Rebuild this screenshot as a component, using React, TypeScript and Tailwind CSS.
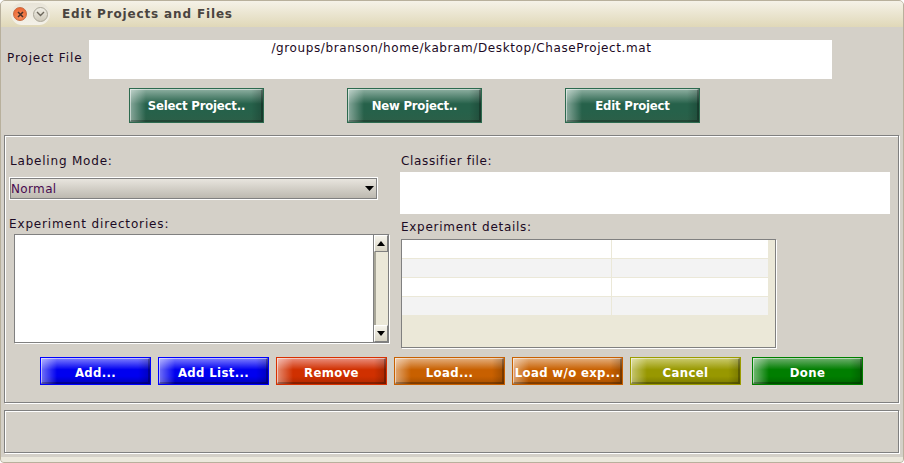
const font = "font-['DejaVu_Sans',sans-serif]";

function GlossButton({ label, border, base, dark, light, className = "", textClass = "" }: { label: string; border: string; base: string; dark: string; light: string; className?: string; textClass?: string }) {
  return (
    <button
      className={`relative flex items-center justify-center border whitespace-nowrap text-white font-bold text-[13px] overflow-hidden font-['DejaVu_Sans_Condensed','DejaVu_Sans',sans-serif] ${className}`}
      style={{ borderColor: border, background: `linear-gradient(to bottom, ${light} 0%, ${base} 45%, ${base} 70%, ${dark} 100%)` }}
    >
      <span className="absolute inset-y-0 left-0 w-4 bg-gradient-to-r from-white/45 to-transparent" />
      <span className="absolute inset-y-0 right-0 w-3 bg-gradient-to-l from-black/20 to-transparent" />
      <span className="absolute inset-0 border-t border-l border-white/50 border-r-2 border-b-2 border-r-black/25 border-b-black/25" />
      <span className={`relative ${textClass}`}>{label}</span>
    </button>
  );
}

function Etched({ className = "", children }: { className?: string; children?: React.ReactNode }) {
  return (
    <div className={`border border-[#808080] shadow-[inset_1px_1px_0_#fff,1px_1px_0_#fff] ${className}`}>{children}</div>
  );
}

const colors = {
  green: { border: "#2d6a4f", base: "#26614a", dark: "#2c5f48", light: "#8fb0a2" },
  blue: { border: "#0000ff", base: "#0000f0", dark: "#0000b8", light: "#8080ff" },
  red: { border: "#d83000", base: "#d03000", dark: "#b02800", light: "#ea9080" },
  orange: { border: "#c86000", base: "#c86000", dark: "#a85000", light: "#e4b080" },
  olive: { border: "#9c9c00", base: "#989800", dark: "#7c7c00", light: "#cccc70" },
  dgreen: { border: "#008000", base: "#007e00", dark: "#006800", light: "#70b070" },
};

function Arrow({ down }: { down?: boolean }) {
  return (
    <svg width="8" height="5" viewBox="0 0 8 5">
      <path d={down ? "M0 0H8L4 5Z" : "M0 5H8L4 0Z"} fill="#000" />
    </svg>
  );
}

function ScrollBtn({ down }: { down?: boolean }) {
  return (
    <div className="h-[17px] flex items-center justify-center bg-gradient-to-b from-[#f6f4ec] to-[#d8d4c4] border border-[#fff] border-r-[#808080] border-b-[#808080]">
      <Arrow down={down} />
    </div>
  );
}

export default function App() {
  const low = "pt-[4px] tracking-[0.35px]";
  const high = "tracking-[-0.2px]";
  return (
    <div className={`${font} w-[904px] h-[463px] bg-[#d4d0c8] flex flex-col rounded-t-[5px] rounded-b-[4px] border border-[#b8b09c] overflow-hidden text-[#1c0a24] text-xs tracking-[0.45px]`}>
      <div className="h-[26px] shrink-0 flex items-center bg-gradient-to-b from-[#f5f2e8] to-[#e0d8b8]">
        <div className="ml-[10px] flex items-center gap-[6px] h-[22px] px-[2px] rounded-full bg-gradient-to-b from-[#e8e4d8] to-[#f4f1e8]">
          <div className="w-[14px] h-[14px] rounded-full bg-[radial-gradient(circle_at_50%_70%,#f89060,#e85c28)] border border-[#c86a40] flex items-center justify-center">
            <svg width="7" height="7" viewBox="0 0 7 7"><path d="M1 1L6 6M6 1L1 6" stroke="#4a3028" strokeWidth="1.6" /></svg>
          </div>
          <div className="w-[15px] h-[15px] rounded-full bg-gradient-to-b from-[#f0eee6] to-[#cfcabb] border border-[#aaa698] flex items-center justify-center">
            <svg width="9" height="6" viewBox="0 0 9 6"><path d="M1 1L4.5 4.5L8 1" fill="none" stroke="#6a655a" strokeWidth="1.4" /></svg>
          </div>
        </div>
        <span className="ml-[12px] font-bold text-[12px] tracking-[0.85px] text-[#4a4440]">Edit Projects and Files</span>
      </div>

      <div className="flex items-center h-[39px] mt-[13px] pl-[6px] shrink-0">
        <span className="w-[82px] tracking-[0.87px] -mt-[4px]">Project File</span>
        <div className="w-[743px] h-[39px] bg-white text-center pt-[1px] pl-[2px] leading-[14px] tracking-[0.6px]">/groups/branson/home/kabram/Desktop/ChaseProject.mat</div>
      </div>

      <div className="flex h-[35px] mt-[9px] pl-[128px] gap-[83px] shrink-0">
        <GlossButton label="Select Project.." {...colors.green} className="w-[135px]" textClass={high} />
        <GlossButton label="New Project.." {...colors.green} className="w-[135px]" textClass={high} />
        <GlossButton label="Edit Project" {...colors.green} className="w-[135px]" textClass={high} />
      </div>

      <Etched className="relative mt-[12px] ml-[3px] mr-[4px] h-[268px] shrink-0 flex flex-col">
        <div className="flex h-[221px]">
          <div className="w-[394px] pl-[4px] pt-[18px] shrink-0">
            <div className="pl-[1px] leading-[14px] tracking-[0.8px]">Labeling Mode:</div>
            <div className="mt-[10px] ml-[1px] w-[367px] h-[21px] flex items-center justify-between pr-[1px] bg-gradient-to-b from-[#e8e5de] to-[#bdb9b0] border border-[#808080] shadow-[0_0_0_1px_#fff]">
              <span className="text-[#4a0a50] tracking-[0.35px]">Normal</span>
              <svg width="9" height="5" viewBox="0 0 9 5" className="mr-[1px]"><path d="M0 0H9L4.5 5Z" fill="#000" /></svg>
            </div>
            <div className="mt-[18px] leading-[14px] tracking-[0.85px]">Experiment directories:</div>
            <div className="mt-[3px] ml-[5px] w-[375px] h-[109px] flex border border-[#808080] shadow-[1px_1px_0_#fff] bg-white">
              <div className="flex-1" />
              <div className="w-[15px] flex flex-col border-l border-[#808080] bg-[#ebe8d8]">
                <ScrollBtn />
                <div className="flex-1 border-l-2 border-l-[#a8a698]" />
                <ScrollBtn down />
              </div>
            </div>
          </div>
          <div className="flex-1 pl-[1px] pt-[18px] min-w-0">
            <div className="pl-[1px] leading-[14px] tracking-[0.65px]">Classifier file:</div>
            <div className="mt-[4px] w-[490px] h-[42px] bg-white" />
            <div className="mt-[6px] pl-[1px] leading-[14px] tracking-[0.72px]">Experiment details:</div>
            <div className="mt-[5px] ml-[1px] w-[375px] h-[109px] border border-[#808080] shadow-[1px_1px_0_#fff] bg-[#ebe8d8]">
              {[0, 1, 2, 3].map((i) => (
                <div key={i} className={`w-[366px] h-[19px] grid grid-cols-[210px_1fr] border-b border-[#ebe8d8] last:border-b-0 last:h-[18px] ${i % 2 ? "bg-[#f3f3f3]" : "bg-white"}`}>
                  <div className="border-r border-[#ebe8d8]" />
                  <div />
                </div>
              ))}
            </div>
          </div>
        </div>
        <div className="flex h-[28px] pl-[35px] gap-[7px]">
          <GlossButton label="Add..." {...colors.blue} className="w-[111px]" textClass={low} />
          <GlossButton label="Add List..." {...colors.blue} className="w-[111px]" textClass={low} />
          <GlossButton label="Remove" {...colors.red} className="w-[111px]" textClass={low} />
          <GlossButton label="Load..." {...colors.orange} className="w-[111px]" textClass={low} />
          <GlossButton label="Load w/o exp..." {...colors.orange} className="w-[111px]" textClass={low} />
          <GlossButton label="Cancel" {...colors.olive} className="w-[111px]" textClass={low} />
          <GlossButton label="Done" {...colors.dgreen} className="w-[111px] ml-[4px]" textClass={low} />
        </div>
      </Etched>

      <Etched className="mt-[7px] ml-[3px] mr-[4px] h-[43px] shrink-0" />
      <div className="flex-1 mt-[4px] bg-[#ebe8dc]" />
    </div>
  );
}
